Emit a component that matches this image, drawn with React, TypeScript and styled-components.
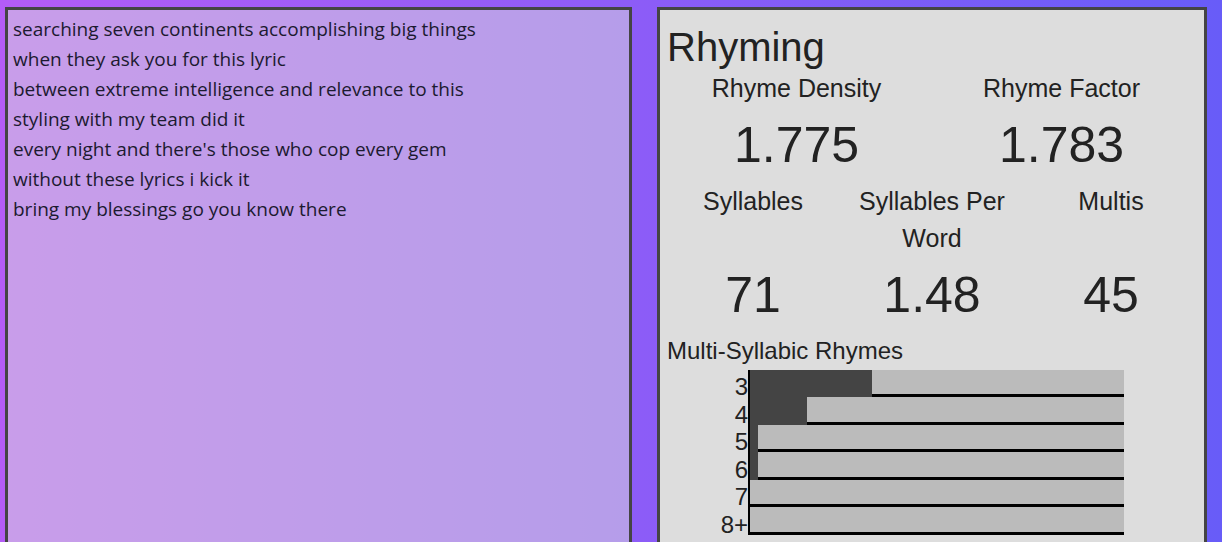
import React from "react";
import styled, { createGlobalStyle } from "styled-components";

const GlobalStyle = createGlobalStyle`
  html, body {
    margin: 0;
    padding: 0;
    overflow: hidden;
  }
  body {
    background: linear-gradient(90deg, #b45cf6 0%, #685cf8 100%);
    color: #222;
  }
`;

const Page = styled.div`
  display: grid;
  grid-template-columns: 627px 550px;
  column-gap: 25px;
  padding: 7px 0 0 5px;
  height: 100vh;
  box-sizing: border-box;
  align-items: start;
`;

const LyricsPanel = styled.div`
  box-sizing: border-box;
  height: 580px;
  border: 3px solid #444;
  background: rgba(221, 221, 221, 0.5);
  padding: 4px 5px;
  font-family: "Open Sans", "Noto Sans", sans-serif;
  font-size: 19px;
  line-height: 30px;
  color: #1c1a30;
`;

const LyricLine = styled.div`
  white-space: nowrap;
`;

const StatsPanel = styled.div`
  box-sizing: border-box;
  height: 580px;
  border: 3px solid #444;
  background: #dddddd;
  padding: 14px 7px;
  font-family: "Liberation Sans", Arial, sans-serif;
  color: #222;
`;

const Title = styled.h1`
  margin: 0;
  font-size: 40px;
  font-weight: normal;
  line-height: 46px;
`;

const StatGrid = styled.div<{ $cols: string }>`
  display: grid;
  grid-template-columns: ${(p) => p.$cols};
  text-align: center;
`;

const StatLabel = styled.div`
  font-size: 25px;
  line-height: 1.5;
  align-self: start;
`;

const StatValue = styled.div`
  font-size: 50px;
  line-height: 1.5;
`;

const SectionTitle = styled.h2`
  margin: 0;
  font-size: 24px;
  font-weight: normal;
  line-height: 36px;
`;

const Chart = styled.div`
  display: grid;
  grid-template-columns: 81px 376px;
  margin-top: 1px;
`;

const BarLabel = styled.div`
  font-size: 24px;
  line-height: 20px;
  text-align: right;
  align-self: end;
`;

const BarTrack = styled.div`
  display: flex;
  height: 27.5px;
  border-left: 2px solid #000;
`;

const BarFill = styled.div`
  background: #444444;
  height: 100%;
  flex: none;
`;

const BarRest = styled.div`
  flex: 1;
  background: #bbbbbb;
  border-bottom: 3px solid #000;
`;

const lyrics = [
  "searching seven continents accomplishing big things",
  "when they ask you for this lyric",
  "between extreme intelligence and relevance to this",
  "styling with my team did it",
  "every night and there's those who cop every gem",
  "without these lyrics i kick it",
  "bring my blessings go you know there",
];

const topStats = [
  { label: "Rhyme Density", value: "1.775" },
  { label: "Rhyme Factor", value: "1.783" },
];

const countStats = [
  { label: "Syllables", value: "71" },
  { label: "Syllables Per Word", value: "1.48" },
  { label: "Multis", value: "45" },
];

const bars = [
  { label: "3", fill: 121.7 },
  { label: "4", fill: 56.7 },
  { label: "5", fill: 8 },
  { label: "6", fill: 8 },
  { label: "7", fill: 0 },
  { label: "8+", fill: 0 },
];

type StatItem = { label: string; value: string };

function Stats({ items, cols }: { items: StatItem[]; cols: string }) {
  return (
    <StatGrid $cols={cols}>
      {items.map((s) => (
        <StatLabel key={"l" + s.label}>{s.label}</StatLabel>
      ))}
      {items.map((s) => (
        <StatValue key={"v" + s.label}>{s.value}</StatValue>
      ))}
    </StatGrid>
  );
}

export default function App() {
  return (
    <>
      <GlobalStyle />
      <Page>
        <LyricsPanel>
          {lyrics.map((l, i) => (
            <LyricLine key={i}>{l}</LyricLine>
          ))}
        </LyricsPanel>
        <StatsPanel>
          <Title>Rhyming</Title>
          <Stats items={topStats} cols="259px 271px" />
          <Stats items={countStats} cols="172px 186px 172px" />
          <SectionTitle>Multi-Syllabic Rhymes</SectionTitle>
          <Chart>
            {bars.map((b) => (
              <React.Fragment key={b.label}>
                <BarLabel>{b.label}</BarLabel>
                <BarTrack>
                  {b.fill > 0 && <BarFill style={{ width: `${b.fill}px` }} />}
                  <BarRest />
                </BarTrack>
              </React.Fragment>
            ))}
          </Chart>
        </StatsPanel>
      </Page>
    </>
  );
}
